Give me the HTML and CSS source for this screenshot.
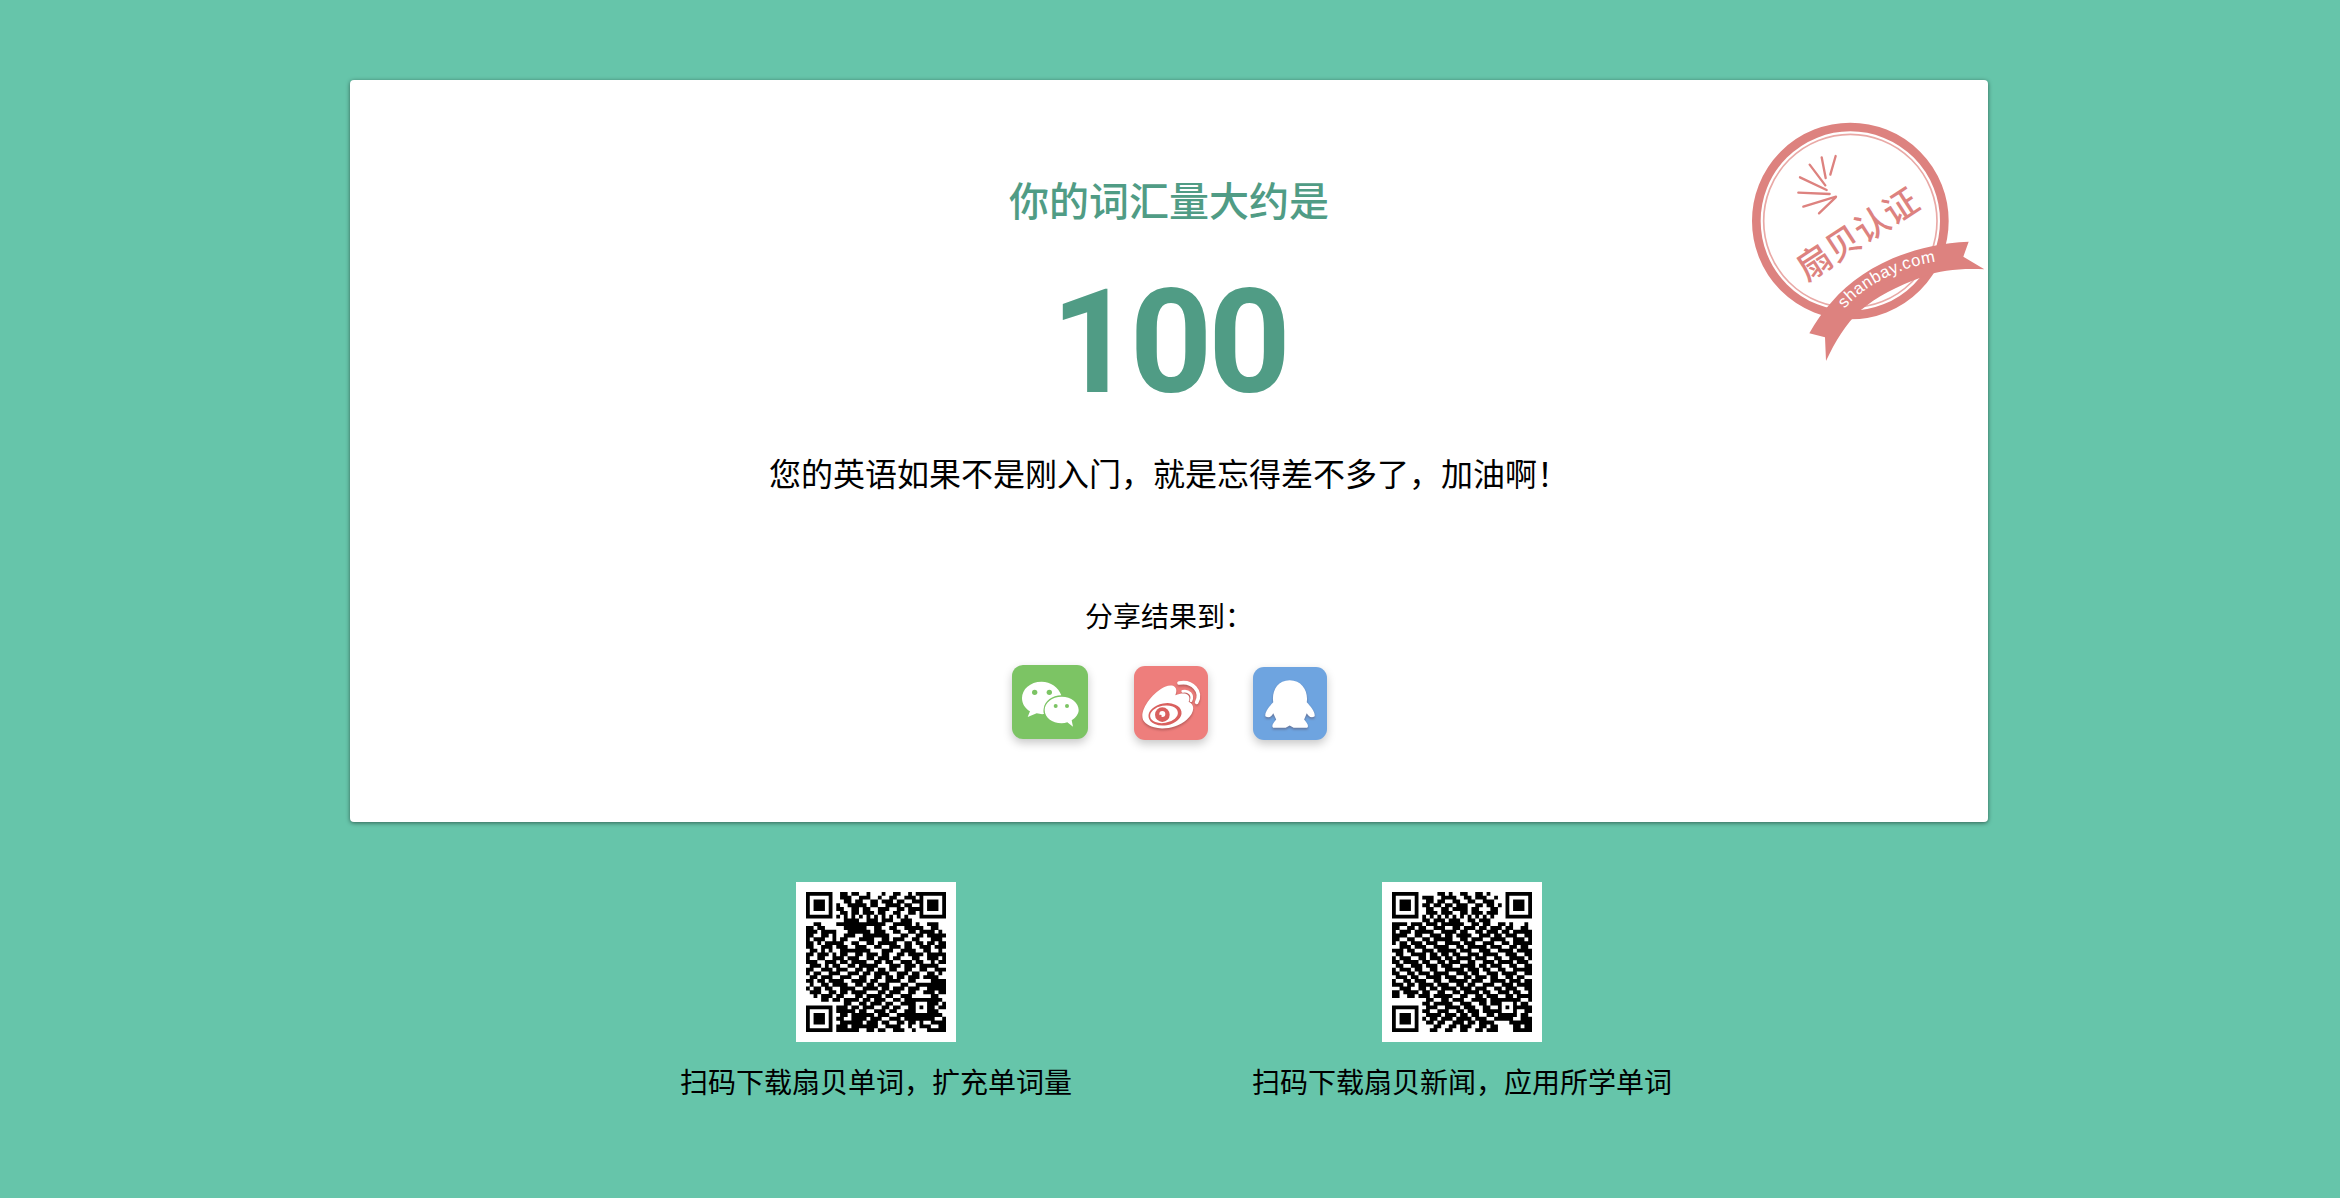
FILE: index.html
```html
<!DOCTYPE html>
<html lang="zh-CN">
<head>
<meta charset="utf-8">
<title>你的词汇量大约是</title>
<link rel="stylesheet" href="styles.css">
</head>
<body>
<main class="page">
  <section class="card">
    <svg class="stamp" viewBox="0 0 810 810" aria-hidden="true">
      <circle class="ring-thick" cx="391" cy="363" r="282"/>
      <circle class="ring-thin" cx="391" cy="363" r="260"/>
      <g class="rays">
        <path d="M347 168 331 224"/>
        <path d="M305 172 317 234"/>
        <path d="M269 194 316 256"/>
        <path d="M240 232 320 270"/>
        <path d="M235 278 329 282"/>
        <path d="M250 320 348 290"/>
        <path d="M297 340 347 292"/>
      </g>
      <path class="ribbon" d="M268 700 C286 668 308 635 335 606 C420 505 570 432 746 425 L730 470 L793 508 C720 505 665 510 610 530 C530 558 470 590 420 632 C378 670 345 725 318 783 L315 712 Z"/>
      <text class="stamp-name" transform="translate(260 546) rotate(-33)">扇贝认证</text>
      <path id="ribbon-curve" class="curve" d="M362 640 C420 565 530 498 670 482"/>
      <text class="stamp-url"><textPath href="#ribbon-curve" startOffset="18">shanbay.com</textPath></text>
    </svg>

    <h1 class="title">你的词汇量大约是</h1>
    <p class="score">100</p>
    <p class="comment">您的英语如果不是刚入门，就是忘得差不多了，加油啊！</p>
    <p class="share-label">分享结果到：</p>

    <div class="share-row">
      <a class="share share-wechat" href="#" aria-label="微信">
        <svg viewBox="67 42 226 222">
          <path class="glyph" d="M155 92C120 92 96 115 96 141C96 158 105 172 120 181L113 198L140 187C148 189 156 190 162 189C160 183 160 178 161 173C164 150 187 133 214 133C205 108 182 92 155 92Z"/>
          <circle class="eye-wechat" cx="134" cy="124" r="8"/>
          <circle class="eye-wechat" cx="178" cy="124" r="8"/>
          <path class="glyph" d="M215 137C186 137 164 155 164 177C164 199 186 217 215 217C221 217 226 216 232 214L249 227L245 208C257 200 266 189 266 177C266 155 244 137 215 137Z"/>
          <circle class="eye-wechat" cx="197" cy="165" r="6"/>
          <circle class="eye-wechat" cx="231" cy="165" r="6"/>
        </svg>
      </a>
      <a class="share share-weibo" href="#" aria-label="微博">
        <svg viewBox="432 45 222 222">
          <g class="glyph-shadow">
            <path class="glyph" d="M457 195C457 165 492 122 525 107C550 97 566 108 556 133C585 121 605 130 596 152C616 160 614 186 590 206C565 228 522 238 492 229C471 223 457 212 457 195Z"/>
            <path class="wave wave-outer" d="M567 96C608 88 637 122 620 154"/>
            <path class="wave wave-inner" d="M578 121C596 117 611 131 603 149"/>
          </g>
          <ellipse class="eye-weibo" cx="525" cy="190" rx="50" ry="33" transform="rotate(-10 525 190)"/>
          <ellipse class="pupil-white" cx="522" cy="190" rx="42" ry="26" transform="rotate(-10 522 190)"/>
          <circle class="eye-weibo" cx="517" cy="191" r="22"/>
          <circle class="pupil-white" cx="517" cy="189" r="9"/>
          <circle class="eye-weibo" cx="511" cy="195" r="4"/>
        </svg>
      </a>
      <a class="share share-qq" href="#" aria-label="QQ">
        <svg viewBox="790 48 222 222">
          <path class="glyph glyph-shadow" d="M900 88C862 88 845 122 850 155C838 168 824 184 826 198C838 206 846 197 850 189L859 208C851 217 843 228 850 233L888 233L900 226L912 233L953 233C960 228 952 217 944 208L952 189C957 197 965 206 976 198C978 184 964 168 952 155C957 122 938 88 900 88Z"/>
        </svg>
      </a>
    </div>
  </section>

  <section class="apps">
    <figure class="app">
      <div class="qr"><svg id="qr-words" class="qr-code" viewBox="0 0 37 37" aria-hidden="true"></svg></div>
      <figcaption class="app-caption">扫码下载扇贝单词，扩充单词量</figcaption>
    </figure>
    <figure class="app">
      <div class="qr"><svg id="qr-news" class="qr-code" viewBox="0 0 37 37" aria-hidden="true"></svg></div>
      <figcaption class="app-caption">扫码下载扇贝新闻，应用所学单词</figcaption>
    </figure>
  </section>
</main>
<script src="qr.js"></script>
</body>
</html>
```

FILE: styles.css
```css
* { box-sizing: border-box; }

html, body {
  margin: 0;
  height: 100%;
}

body {
  background: #66c5aa;
  color: #000;
  font-family: "Liberation Sans", "Noto Sans CJK SC", sans-serif;
  overflow: hidden;
}

.page {
  display: flex;
  flex-direction: column;
  align-items: center;
  padding: 80px 2px 0 0;
}

.card {
  position: relative;
  width: 1638px;
  height: 742px;
  padding-top: 94px;
  background: #fff;
  border-radius: 4px;
  box-shadow: 0 1px 4px rgba(0, 0, 0, .5);
  text-align: center;
}

.stamp {
  position: absolute;
  left: 1370px;
  top: 20px;
  width: 270px;
  height: 270px;
}

.ring-thick { fill: none; stroke: #dd827f; stroke-width: 26; }
.ring-thin { fill: none; stroke: #e9a9a6; stroke-width: 5; }
.rays path { fill: none; stroke: #dd827f; stroke-width: 7; stroke-linecap: round; }
.ribbon { fill: #dd827f; }
.curve { fill: none; }

.stamp-name {
  fill: #dd827f;
  font-family: "Noto Sans CJK SC", sans-serif;
  font-size: 103px;
  font-weight: 500;
}

.stamp-url {
  fill: #fff;
  font-family: "Liberation Sans", sans-serif;
  font-size: 50px;
  letter-spacing: 2px;
}

.title {
  margin: 0;
  color: #509c85;
  font-size: 40px;
  font-weight: 500;
  line-height: 56px;
}

.score {
  margin: 38px 0 0;
  color: #509c85;
  font-family: Roboto, "Liberation Sans", sans-serif;
  font-size: 144px;
  font-weight: 700;
  letter-spacing: -4px;
  line-height: 150px;
}

.comment {
  margin: 34px 0 0;
  font-size: 32px;
  line-height: 46px;
}

.share-label {
  margin: 100px 0 0;
  font-size: 28px;
  line-height: 40px;
}

.share-row {
  display: flex;
  justify-content: center;
  align-items: flex-start;
  gap: 45px;
  margin-top: 27px;
  padding-left: 1px;
}

.share {
  display: block;
  width: 74px;
  height: 74px;
  border-radius: 11px;
  box-shadow: 0 4px 10px rgba(0, 0, 0, .22);
}

.share svg { display: block; width: 100%; height: 100%; }

.share-wechat { width: 76px; margin-right: 1px; background: #7cc464; }
.share-weibo { margin-top: 1px; background: #ee7e7c; }
.share-qq { margin-top: 2px; height: 73px; background: #6ea4e0; }

.glyph { fill: #fff; }
.glyph-shadow { filter: drop-shadow(0 5px 3px rgba(80, 30, 30, .35)); }
.eye-wechat { fill: #7cc464; }
.eye-weibo { fill: #d9605e; }
.pupil-white { fill: #fff; }
.wave { fill: none; stroke: #fff; stroke-linecap: round; }
.wave-outer { stroke-width: 11; }
.wave-inner { stroke-width: 8; }

.apps {
  display: grid;
  grid-template-columns: 586px 586px;
  margin-top: 60px;
}

.app {
  display: flex;
  flex-direction: column;
  align-items: center;
  margin: 0;
}

.qr {
  width: 160px;
  height: 160px;
  padding: 10px;
  background: #fff;
}

.qr-code { display: block; width: 140px; height: 140px; }
.qr-code path { fill: none; stroke: #000; stroke-width: 1.02; }

.app-caption {
  margin-top: 21px;
  font-size: 28px;
  line-height: 42px;
  white-space: nowrap;
}
```

FILE: qr.js
```js
var CODES = {
  "qr-words": [
    "0000000001101100100010011001010000000",
    "0000000001110011100100110011100000000",
    "0000000000110110011011101100110000000",
    "0000000010011111011001111011000000000",
    "0000000011001101100111001101110000000",
    "0000000001101101110110011001100000000",
    "0000000010101010101010101010000000000",
    "0000000000111100111011100111000000000",
    "0011000011111111111110011111010011100",
    "1101100000111111001100110011111001100",
    "1110111100011111101110011001101111010",
    "1100110100111001111111000110011011111",
    "1011100101100011110011011100110001110",
    "1101011111001100110111110011011011011",
    "1100111011100111001100111011001110111",
    "0110101001111111100011100111100110010",
    "1101110101100110111011001101111011111",
    "1001100111011100110111011000110011101",
    "1110011101101111001101100111011001011",
    "0111010110011011111000111011101111100",
    "1100111011100110110110110011001100111",
    "1011001110011101101111001110110011010",
    "0110111001110011001101101101110111100",
    "1101101111001111011001111001100001111",
    "0100110111100110110111000110011111111",
    "1011011001111001111011011101110011111",
    "0111001101101111000110111001100111011",
    "0010111011000110111101100111000001100",
    "0000110110111101101110011011000001110",
    "0000000000110011011101100111001101101",
    "0000000011101101110011011001010011011",
    "0000000011111011001110110011011101100",
    "0000000001101111110111001111010011110",
    "0000000011001111011100111011111111001",
    "0000000001111110111011001101101001111",
    "0000000011101111111001111001001110011",
    "0000000011111100110110011100100011111"
  ],
  "qr-news": [
    "0000000000001101001100110100000000000",
    "0000000011100111100110111001000000000",
    "0000000001101100110011001110000000000",
    "0000000011011011011100110110100000000",
    "0000000001100110111101100011000000000",
    "0000000001110111001101110111000000000",
    "0000000010101010101010101010000000000",
    "0000000011011101110011011100000000000",
    "1111011101110111111001101100110100010",
    "1100110110011100110111011011101100110",
    "1011101111100111101100110111011011111",
    "1111001100111011011110011101101110011",
    "1100110011011111001101110011110011101",
    "1011011101110011110111001110011011111",
    "0011101110011110011011111011100110110",
    "1110110011101111101110011100111101111",
    "0110011110110110110011101111001110011",
    "1011100110111011011110111001100111101",
    "1101111011001101110011001110111101110",
    "0110011101110111001111011011100110011",
    "1011101100110011111011101100110011111",
    "1100110111011110011101100111011110011",
    "0111011001111011100110111011001101100",
    "1001101110011001111101110011110111011",
    "1110110111101110011011001110011101111",
    "0011100110110111101110111001101110011",
    "1101111011001100110111101100111011001",
    "1100110111011111001100110111001101111",
    "0000000001100110111001111011010111001",
    "0000000011011111001110011011111110110",
    "0000000001110011110111001100100011111",
    "0000000011001110011011101111011010011",
    "0000000001111011101101100110000110110",
    "0000000010110111011110111001111100111",
    "0000000001101100111011011110000111111",
    "0000000000011001101110011011000011011",
    "0000000000110011001100110111000011111"
  ]
};

function finder(put, x, y) {
  for (var r = 0; r < 7; r++) {
    for (var c = 0; c < 7; c++) {
      var edge = r === 0 || r === 6 || c === 0 || c === 6;
      var core = r >= 2 && r <= 4 && c >= 2 && c <= 4;
      put(x + c, y + r, edge || core ? "1" : "0");
    }
  }
}

function align(put, x, y) {
  for (var r = 0; r < 5; r++) {
    for (var c = 0; c < 5; c++) {
      var edge = r === 0 || r === 4 || c === 0 || c === 4;
      put(x + c, y + r, edge || (r === 2 && c === 2) ? "1" : "0");
    }
  }
}

Object.keys(CODES).forEach(function (id) {
  var grid = CODES[id].map(function (row) { return row.split(""); });
  var put = function (x, y, v) { grid[y][x] = v; };
  finder(put, 0, 0);
  finder(put, 30, 0);
  finder(put, 0, 30);
  align(put, 28, 28);

  var d = "";
  grid.forEach(function (row, y) {
    for (var x = 0; x < 37; x++) {
      if (row[x] !== "1") continue;
      var start = x;
      while (row[x + 1] === "1") x++;
      d += "M" + start + " " + (y + 0.5) + "H" + (x + 1);
    }
  });
  var path = document.createElementNS("http://www.w3.org/2000/svg", "path");
  path.setAttribute("d", d);
  document.getElementById(id).appendChild(path);
});
```
